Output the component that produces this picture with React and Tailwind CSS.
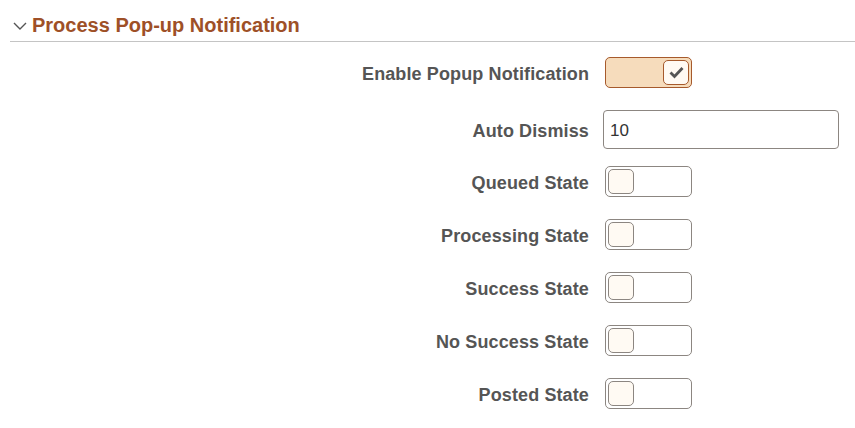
import { useState } from "react";

const rows = [
  { label: "Queued State", key: "queued" },
  { label: "Processing State", key: "processing" },
  { label: "Success State", key: "success" },
  { label: "No Success State", key: "noSuccess" },
  { label: "Posted State", key: "posted" },
];

const Toggle = ({ on, onChange }) => (
  <button
    onClick={() => onChange(!on)}
    className={`flex items-center w-[87px] h-[31px] rounded-[5px] border p-[2px] ${
      on ? "bg-[#f6dcbc] border-[#a65a2c] justify-end" : "bg-white border-[#8c8681] justify-start"
    }`}
  >
    <span
      className={`flex items-center justify-center w-[26px] h-[25px] rounded-[5px] border bg-[#fffaf3] ${
        on ? "border-[#a65a2c]" : "border-[#8c8681]"
      }`}
    >
      {on && (
        <svg width="15" height="13" viewBox="0 0 15 13">
          <path d="M1.5 6.5 L5.5 10.5 L13.5 2" fill="none" stroke="#555555" strokeWidth="2.8" />
        </svg>
      )}
    </span>
  </button>
);

const Label = ({ children }) => (
  <div className="w-[589px] shrink-0 pt-[3px] text-right text-[18px] tracking-[0.12px] font-bold text-[#555555]">
    {children}
  </div>
);

const App = () => {
  const [enabled, setEnabled] = useState(true);
  const [dismiss, setDismiss] = useState("10");
  const [states, setStates] = useState({});

  return (
    <div className="w-[855px] h-[428px] bg-white font-['Liberation_Sans',Arial,sans-serif]">
      <div className="ml-[10px] pt-[12px] h-[42px] border-b border-[#c4c4c4] flex items-start">
        <svg width="16" height="26" viewBox="0 0 16 26" className="ml-[2px] mt-[1px]">
          <path d="M2 10 L8 16 L14 10" fill="none" stroke="#555555" strokeWidth="1.4" />
        </svg>
        <h2 className="ml-[4px] mt-[1px] text-[20px] leading-[24px] font-bold text-[#9e5027]">Process Pop-up Notification</h2>
      </div>

      <div className="flex flex-col">
        <div className="flex items-center mt-[15px] h-[31px]">
          <Label>Enable Popup Notification</Label>
          <div className="ml-[16px]">
            <Toggle on={enabled} onChange={setEnabled} />
          </div>
        </div>

        <div className="flex items-center mt-[22px] h-[39px]">
          <Label>Auto Dismiss</Label>
          <input
            value={dismiss}
            onChange={(e) => setDismiss(e.target.value)}
            className="ml-[14px] w-[236px] h-[39px] rounded-[4px] border border-[#8c8681] px-[6px] pt-[2px] text-[17px] text-[#333333] outline-none"
          />
        </div>

        <div className="flex flex-col gap-[22px] mt-[17px]">
          {rows.map((r) => (
            <div key={r.key} className="flex items-center h-[31px]">
              <Label>{r.label}</Label>
              <div className="ml-[16px]">
                <Toggle
                  on={!!states[r.key]}
                  onChange={(v) => setStates((s) => ({ ...s, [r.key]: v }))}
                />
              </div>
            </div>
          ))}
        </div>
      </div>
    </div>
  );
};

export default App;
